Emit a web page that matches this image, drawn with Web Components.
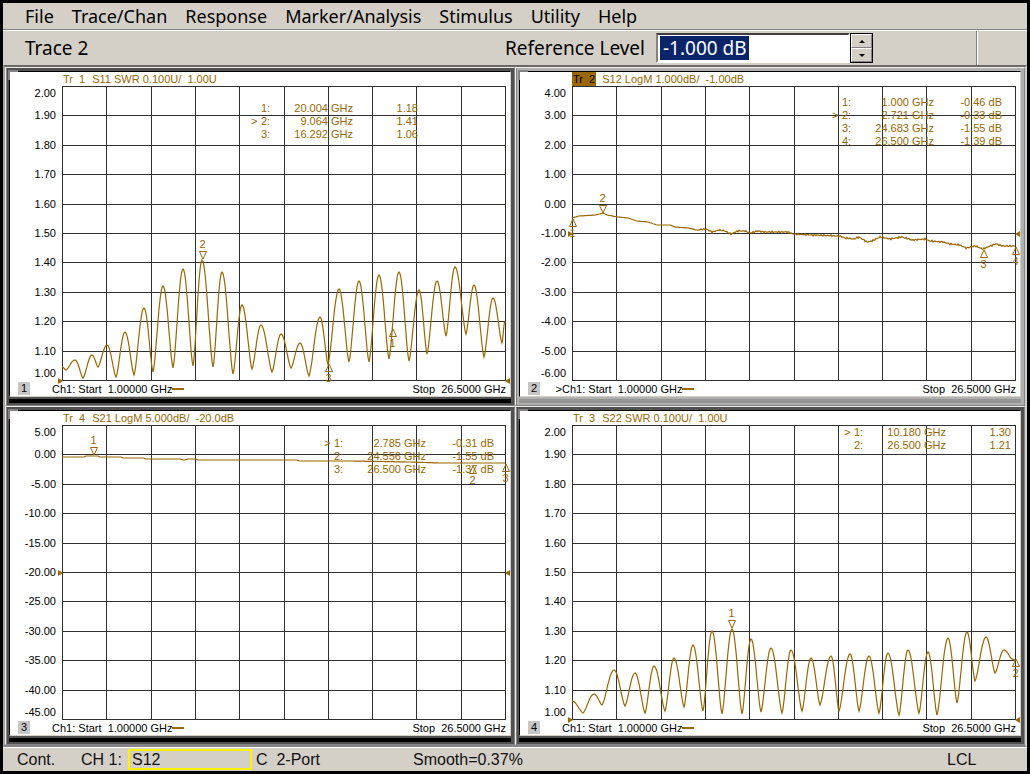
<!DOCTYPE html>
<html lang="en">
<head>
<meta charset="utf-8">
<title>Network Analyzer</title>
<style>
  html, body { margin: 0; }
  body { font-family: "Liberation Sans", Arial, sans-serif; background: #000; }
</style>
</head>
<body>
<analyzer-app></analyzer-app>

<template id="app-template">
  <style>
    :host { display: flex; flex-direction: column; box-sizing: border-box; min-height: 100vh; border: 3px solid #000; background: #d4d0c8; }
    main { flex: 1; display: grid; grid-template-columns: 1fr 1fr; grid-auto-rows: 1fr; border: 2px solid #848284; border-top-color: #6b6967; border-left-color: #a4a29e; border-right-color: #d4d0c8; }
  </style>
  <menu-bar></menu-bar>
  <entry-bar></entry-bar>
  <main></main>
  <status-bar></status-bar>
</template>

<template id="menu-template">
  <style>
    :host { display: block; border-bottom: 1px solid #848284; box-shadow: 0 1px #fff; margin-bottom: 1px; font-family: "Noto Sans", Tahoma, sans-serif; }
    nav { display: flex; gap: 18px; height: 26px; padding-left: 22px; align-items: center; }
    button { all: unset; font-size: 18px; line-height: 26px; color: #000; white-space: nowrap; }
  </style>
  <nav aria-label="Main menu">
    <button>File</button><button>Trace/Chan</button><button>Response</button><button>Marker/Analysis</button><button>Stimulus</button><button>Utility</button><button>Help</button>
  </nav>
</template>

<template id="entry-template">
  <style>
    :host { display: flex; height: 34px; align-items: center; font: 19px "Noto Sans", Tahoma, sans-serif; white-space: nowrap; }
    .name { flex: 1; padding-left: 22px; }
    label { margin-right: 11px; }
    input { box-sizing: border-box; width: 194px; height: 30px; padding: 0 5px; border: 2px solid #848284; border-right-color: #fff; border-bottom-color: #fff; border-top-color: #404040;
      color: #fff; font: inherit; outline: 0;
      background: linear-gradient(#0a246a, #0a246a) 2px 1px / 89px 24px no-repeat #fff; }
    .spin { display: flex; flex-direction: column; width: 23px; height: 30px; box-sizing: border-box; border: 1px solid #000; background: #000; }
    .spin button { flex: 1; display: flex; align-items: center; justify-content: center; padding: 0; background: #d4d0c8; border: 1px solid #fff; border-right-color: #848284; border-bottom-color: #848284; }
    .tail { box-sizing: border-box; align-self: stretch; width: 51px; margin-left: 103px; border-left: 1px solid #848284; box-shadow: inset 1px 0 #fff; }
  </style>
  <span class="name">Trace 2</span>
  <label for="level">Reference Level</label>
  <input id="level" value="-1.000 dB">
  <span class="spin">
    <button aria-label="Increase"><svg width="6" height="3"><path d="M0 3L3 0L6 3Z"/></svg></button>
    <button aria-label="Decrease"><svg width="6" height="3"><path d="M0 0L3 3L6 0Z"/></svg></button>
  </span>
  <span class="tail"></span>
</template>

<template id="status-template">
  <style>
    :host { display: flex; align-items: center; height: 23px; border-top: 1px solid #fff; font-size: 16px; color: #111; white-space: pre; }
    .mode { width: 64px; padding-left: 14px; }
    .chan { width: 47px; }
    .param { box-sizing: border-box; width: 124px; height: 21px; line-height: 18px; padding-left: 2px; border: 2px solid #fff200; margin-right: 4px; }
    .cal { width: 157px; }
    .smooth { flex: 1; }
    .lock { width: 80px; }
  </style>
  <span class="mode">Cont.</span><span class="chan">CH 1:</span><span class="param">S12</span><span class="cal">C  2-Port</span><span class="smooth">Smooth=0.37%</span><span class="lock">LCL</span>
</template>

<template id="pane-template">
  <style>
    :host { --frame: #505050; --bar: #000; --gold: #9a6700; display: flex; min-width: 0; font-size: 11px; line-height: 13px; color: #000; white-space: pre;
      border: 1px solid #f0eee8; border-right-color: #848284; border-bottom-color: #848284; }
    :host([active]) { --frame: #b0b0b0; --bar: #959595; }
    .frame { position: relative; flex: 1; min-width: 0; display: flex; flex-direction: column; background: var(--frame); padding: 2px 3px 2px 2px; border-left: 1px solid #848284; border-top: 1px solid var(--frame); }
    .frame::after { content: ""; position: absolute; left: 1px; top: 1px; width: 8px; height: 8px; border: solid #848284; border-width: 2px 0 0 2px; }
    .screen { flex: 1; display: grid; grid-template: 14px 1fr 15px / 52px minmax(0, 1fr) 4px; background: #fff; border: 1px solid #000; border-right-color: #d4d0c8; border-bottom-color: #d4d0c8; }
    .bar { height: 4px; margin-top: 2px; background: var(--bar); }
    header { grid-area: 1 / 2; display: flex; gap: 6px; line-height: 14px; color: var(--gold); }
    header .tr { padding: 0 1px; }
    :host([active]) header .tr { background: var(--gold); color: #000; }
    .scale { grid-area: 2 / 1; display: grid; grid-template-rows: 15fr repeat(9, 29fr) 15fr; align-items: center; justify-items: end; padding-right: 6px; }
    .scale span { display: flex; align-items: center; height: 0; }
    .plot { grid-area: 2 / 2; position: relative; min-height: 200px; }
    .graph { position: absolute; inset: 0; width: 100%; height: 100%; overflow: visible; }
    .graph .g { stroke: #303034; stroke-width: 1; shape-rendering: crispEdges; vector-effect: non-scaling-stroke; fill: none; }
    .graph .t { stroke: #9a6700; stroke-width: 1.2; fill: none; vector-effect: non-scaling-stroke; }
    .mark { position: absolute; width: 0; height: 0; display: flex; flex-direction: column; align-items: center; color: var(--gold); }
    .mark.down { justify-content: flex-end; }
    .mark svg, .ref svg { flex: none; display: block; }
    .ref { position: absolute; }
    .ref.l { left: -4px; } .ref.r { right: -4px; }
    .ref svg { margin-top: -3px; fill: var(--gold); }
    table { position: absolute; border-collapse: collapse; color: var(--gold); }
    td { padding: 0; text-align: right; height: 13px; }
    td:nth-child(1) { width: 10px; text-align: left; }
    td:nth-child(2) { width: 10px; text-align: left; }
    td:nth-child(3) { width: 82px; }
    td:nth-child(4) { width: var(--val, 65px); }
    footer { grid-area: 3 / 1 / 4 / 3; display: flex; align-items: center; padding-left: 8px; line-height: 14px; }
    .idx { width: 12px; background: #c6c6c6; text-align: center; line-height: 13px; }
    .act { width: 22px; text-align: right; }
    .key { width: 12px; height: 2px; background: var(--gold); }
    .stop { margin-left: auto; }
  </style>
  <div class="frame">
    <div class="screen">
      <header><span class="tr"></span><slot name="title"></slot></header>
      <div class="scale"></div>
      <div class="plot"></div>
      <footer><span class="idx"></span><span class="act"></span><span>Ch1: Start  1.00000 GHz</span><span class="key"></span><span class="stop">Stop  26.5000 GHz</span></footer>
    </div>
    <div class="bar"></div>
  </div>
</template>

<script>
const W = 444, H = 295;

// Alternating low/high points joined by a standing-wave ripple with sharp troughs.
function ripple(points) {
  let d = '';
  for (let i = 0; i < points.length - 1; i++) {
    const [x0, y0] = points[i], [x1, y1] = points[i + 1];
    for (let s = 0; s < 12; s++) {
      const t = s / 12;
      const k = y1 < y0 ? Math.pow(Math.sin(t * Math.PI / 2), 1.5)
                        : 1 - Math.pow(Math.cos(t * Math.PI / 2), 1.5);
      d += (d ? 'L' : 'M') + (x0 + (x1 - x0) * t).toFixed(1) + ' ' + (y0 + (y1 - y0) * k).toFixed(1);
    }
  }
  const e = points[points.length - 1];
  return d + 'L' + e[0] + ' ' + e[1];
}

// Straight segments, with a little measurement noise right of `from`.
function line(points, from) {
  let d = 'M' + points[0].join(' ');
  for (let i = 1; i < points.length; i++) {
    const [x0, y0] = points[i - 1], [x1, y1] = points[i];
    for (let x = x0 + 1; x <= x1; x++) {
      const n = x > from ? Math.sin(x * 2.3) * Math.sin(x * 0.37) * 0.9 : 0;
      d += 'L' + x + ' ' + (y0 + (y1 - y0) * (x - x0) / (x1 - x0) + n).toFixed(1);
    }
  }
  return d;
}

const PANES = [
  { n: 1, tr: 1, title: 'S11 SWR 0.100U/  1.00U', top: 2, step: -0.1, ref: 294, right: 88, y: 16, val: 65,
    rows: [['', '1:', '20.004 GHz', '1.18'], ['>', '2:', '9.064 GHz', '1.41'], ['', '3:', '16.292 GHz', '1.06']],
    marks: [['2', 140, 174, 1], ['1', 330, 242, 0], ['3', 266, 277, 0]],
    path: ripple([[0,281],[4,284],[13,274],[21,292],[30,269],[36,281],[45,259],[54,291],[63,246],[72,289],[82,222],[91,286],[101,200],[111,282],[121,183],[131,280],[140,174],[151,281],[160,186],[171,288],[180,219],[190,283],[199,239],[210,286],[219,248],[229,282],[238,257],[247,290],[258,231],[266,278],[277,203],[287,276],[297,195],[307,276],[317,189],[327,273],[337,186],[347,275],[357,204],[365,268],[375,195],[384,250],[393,181],[404,248],[412,199],[422,271],[431,212],[440,257],[443,235]]) },
  { n: 2, tr: 2, active: true, title: 'S12 LogM 1.000dB/  -1.00dB', top: 4, step: -1, ref: 147, right: 14, y: 10, val: 68,
    rows: [['', '1:', '1.000 GHz', '-0.46 dB'], ['>', '2:', '2.721 GHz', '-0.33 dB'], ['', '3:', '24.683 GHz', '-1.55 dB'], ['', '4:', '26.500 GHz', '-1.39 dB']],
    marks: [['1', 0, 132, 0], ['2', 30, 128, 1], ['3', 411, 163, 0], ['4', 443, 160, 0]],
    path: line([[0,132],[7,130],[23,129],[31,127],[35,129],[46,131],[56,132],[65,135],[76,136],[85,139],[98,139],[103,141],[116,142],[125,144],[134,143],[140,146],[147,144],[153,145],[159,148],[166,145],[173,145],[178,147],[186,145],[192,146],[200,146],[216,146],[221,148],[240,149],[268,150],[273,152],[282,153],[287,151],[295,156],[300,155],[308,151],[318,153],[330,151],[340,154],[353,153],[358,155],[371,156],[378,158],[388,159],[394,162],[403,160],[411,163],[418,160],[424,158],[431,160],[443,160]], 125) },
  { n: 3, tr: 4, title: 'S21 LogM 5.000dB/  -20.0dB', top: 5, step: -5, ref: 147, right: 12, y: 12, val: 68,
    rows: [['>', '1:', '2.785 GHz', '-0.31 dB'], ['', '2:', '24.556 GHz', '-1.55 dB'], ['', '3:', '26.500 GHz', '-1.37 dB']],
    marks: [['1', 31, 31, 1], ['2', 410, 40, 0], ['3', 443, 38, 0]],
    path: line([[0,32],[22,32],[24,31],[36,31],[38,32],[59,32],[61,33],[82,33],[84,34],[118,34],[122,35],[126,34],[134,34],[136,35],[235,35],[237,36],[288,36],[348,37],[378,38],[418,38],[443,38]], 999) },
  { n: 4, tr: 3, title: 'S22 SWR 0.100U/  1.00U', top: 2, step: -0.1, ref: 294, right: 5, y: 1, val: 65,
    rows: [['>', '1:', '10.180 GHz', '1.30'], ['', '2:', '26.500 GHz', '1.21']],
    marks: [['1', 159, 204, 1], ['2', 443, 233, 0]],
    path: ripple([[0,276],[11,288],[22,269],[30,280],[42,245],[53,281],[63,248],[73,288],[82,241],[93,286],[102,233],[112,282],[121,220],[131,286],[140,206],[150,289],[160,204],[170,289],[179,214],[189,287],[199,223],[210,288],[219,225],[230,286],[239,233],[248,280],[259,231],[267,286],[278,229],[287,286],[297,231],[307,288],[316,228],[327,290],[336,225],[347,288],[356,227],[365,290],[376,213],[385,278],[395,207],[403,256],[414,212],[423,248],[432,225],[440,234],[443,235]]) }
];

class Base extends HTMLElement {
  constructor(id) {
    super();
    this.attachShadow({ mode: 'open' }).append(document.getElementById(id).content.cloneNode(true));
  }
}

class TracePane extends Base {
  constructor() { super('pane-template'); }
  set data(p) {
    const $ = s => this.shadowRoot.querySelector(s);
    this.toggleAttribute('active', !!p.active);
    const title = document.createElement('span');
    title.slot = 'title';
    title.textContent = p.title;
    this.append(title);
    $('.tr').textContent = 'Tr  ' + p.tr;
    $('.idx').textContent = p.n;
    $('.act').textContent = p.active ? '>' : '';
    $('.scale').innerHTML = Array.from({ length: 11 }, (_, i) => `<span>${(p.top + i * p.step).toFixed(2)}</span>`).join('');
    let grid = '';
    for (let i = 0; i <= 10; i++) {
      const x = Math.round(i * 44.3) + 0.5, y = Math.round(i * 29.4) + 0.5;
      grid += `M${x} 0V${H}M0 ${y}H${W}`;
    }
    const marks = p.marks.map(([label, x, y, down]) => {
      const pos = `left:${(x + 0.5) / W * 100}%;top:${y / H * 100}%`;
      const tri = `<svg width="8" height="9" fill="none" stroke="#9a6700"><path d="${down ? 'M.5 .5H7.5L4 8Z' : 'M.5 8.5H7.5L4 1Z'}"/></svg>`;
      return `<div class="mark${down ? ' down' : ''}" style="${pos}">${down ? `<span>${label}</span>${tri}` : `${tri}<span>${label}</span>`}</div>`;
    }).join('');
    const ry = `top:${(p.ref + 0.5) / H * 100}%`;
    $('.plot').innerHTML = `
      <svg class="graph" viewBox="0 0 ${W} ${H}" preserveAspectRatio="none" aria-hidden="true"><path class="g" d="${grid}"/><path class="t" d="${p.path}"/></svg>
      <div class="ref l" style="${ry}"><svg width="5" height="6"><path d="M0 0L5 3L0 6Z"/></svg></div>
      <div class="ref r" style="${ry}"><svg width="5" height="6"><path d="M5 0L0 3L5 6Z"/></svg></div>
      <table style="right:${p.right}px;top:${p.y}px;--val:${p.val}px">${p.rows.map(r => `<tr>${r.map(c => `<td>${c}</td>`).join('')}</tr>`).join('')}</table>${marks}`;
  }
}

customElements.define('menu-bar', class extends Base { constructor() { super('menu-template'); } });
customElements.define('entry-bar', class extends Base { constructor() { super('entry-template'); } });
customElements.define('status-bar', class extends Base { constructor() { super('status-template'); } });
customElements.define('trace-pane', TracePane);
customElements.define('analyzer-app', class extends Base {
  constructor() {
    super('app-template');
    const main = this.shadowRoot.querySelector('main');
    for (const p of PANES) {
      const pane = new TracePane();
      main.append(pane);
      pane.data = p;
    }
  }
});
</script>
</body>
</html>
